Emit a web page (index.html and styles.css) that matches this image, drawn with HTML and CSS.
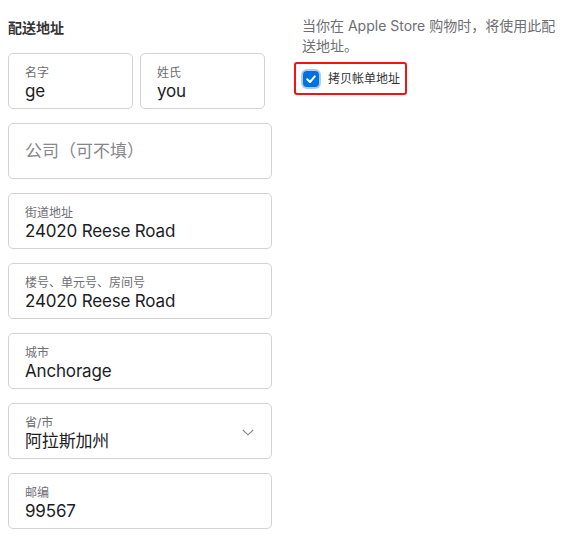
FILE: index.html
```html
<!DOCTYPE html>
<html lang="zh-CN">
<head>
<meta charset="utf-8">
<title>配送地址</title>
<link rel="stylesheet" href="styles.css">
</head>
<body>
<div class="page">
  <section class="form-col">
    <h2 class="title">配送地址</h2>
    <div class="name-row">
      <div class="field">
        <span class="label">名字</span>
        <span class="value">ge</span>
      </div>
      <div class="field">
        <span class="label">姓氏</span>
        <span class="value">you</span>
      </div>
    </div>
    <div class="field field-empty">
      <span class="placeholder">公司（可不填）</span>
    </div>
    <div class="field">
      <span class="label">街道地址</span>
      <span class="value">24020 Reese Road</span>
    </div>
    <div class="field">
      <span class="label">楼号、单元号、房间号</span>
      <span class="value">24020 Reese Road</span>
    </div>
    <div class="field">
      <span class="label">城市</span>
      <span class="value">Anchorage</span>
    </div>
    <div class="field field-select">
      <span class="label">省/市</span>
      <span class="value">阿拉斯加州</span>
      <svg class="chevron" width="12" height="7" viewBox="0 0 12 7"><polyline points="0.8,1 6,5.8 11.2,1" fill="none" stroke="#86868b" stroke-width="1.1"/></svg>
    </div>
    <div class="field">
      <span class="label">邮编</span>
      <span class="value">99567</span>
    </div>
  </section>
  <aside class="info-col">
    <p class="note">当你在 Apple Store 购物时，将使用此配送地址。</p>
    <label class="copy-row">
      <span class="checkbox">
        <svg width="16" height="16" viewBox="0 0 16 16"><polyline points="4.2,8.3 7,11 11.8,5.3" fill="none" stroke="#fff" stroke-width="2" stroke-linecap="round" stroke-linejoin="round"/></svg>
      </span>
      <span class="copy-text">拷贝帐单地址</span>
    </label>
  </aside>
</div>
</body>
</html>
```

FILE: styles.css
```css
* { box-sizing: border-box; }
html, body { margin: 0; padding: 0; background: #fff; }
body {
  font-family: "Inter", "Noto Sans CJK SC", sans-serif;
  color: #1d1d1f;
}
.page {
  display: flex;
  align-items: flex-start;
  padding: 16px 0 0 8px;
}
.form-col {
  width: 264px;
  display: flex;
  flex-direction: column;
  gap: 14px;
}
.title {
  margin: 2px 0 1px;
  font-size: 14px;
  line-height: 20px;
  font-weight: 600;
  color: #333336;
}
.name-row {
  display: grid;
  grid-template-columns: 125px 125px;
  gap: 7px;
}
.field {
  position: relative;
  height: 56px;
  border: 1px solid #d2d2d7;
  border-radius: 5px;
  padding: 11px 16px 0;
  display: flex;
  flex-direction: column;
}
.label {
  font-size: 12px;
  line-height: 16px;
  color: #6e6e73;
}
.value {
  font-size: 17px;
  line-height: 21px;
  color: #1d1d1f;
  letter-spacing: -0.01em;
}
.field-empty {
  padding-top: 0;
  justify-content: center;
}
.placeholder {
  font-size: 17px;
  line-height: 21px;
  color: #86868b;
}
.chevron {
  position: absolute;
  right: 17px;
  top: 25px;
}
.info-col {
  margin-left: 22px;
  width: 265px;
}
.note {
  margin: 0 0 6px 8px;
  font-size: 14px;
  line-height: 20px;
  color: #6e6e73;
}
.copy-row {
  display: inline-flex;
  align-items: center;
  gap: 9px;
  border: 2px solid #f01414;
  border-radius: 3px;
  padding: 7px 5px 6px 7px;
}
.checkbox {
  width: 16px;
  height: 16px;
  border-radius: 4px;
  background: #0071e3;
  box-shadow: 0 0 0 2px #a9cdf3;
  display: flex;
}
.copy-text {
  font-size: 12px;
  line-height: 16px;
  color: #333336;
}
```
